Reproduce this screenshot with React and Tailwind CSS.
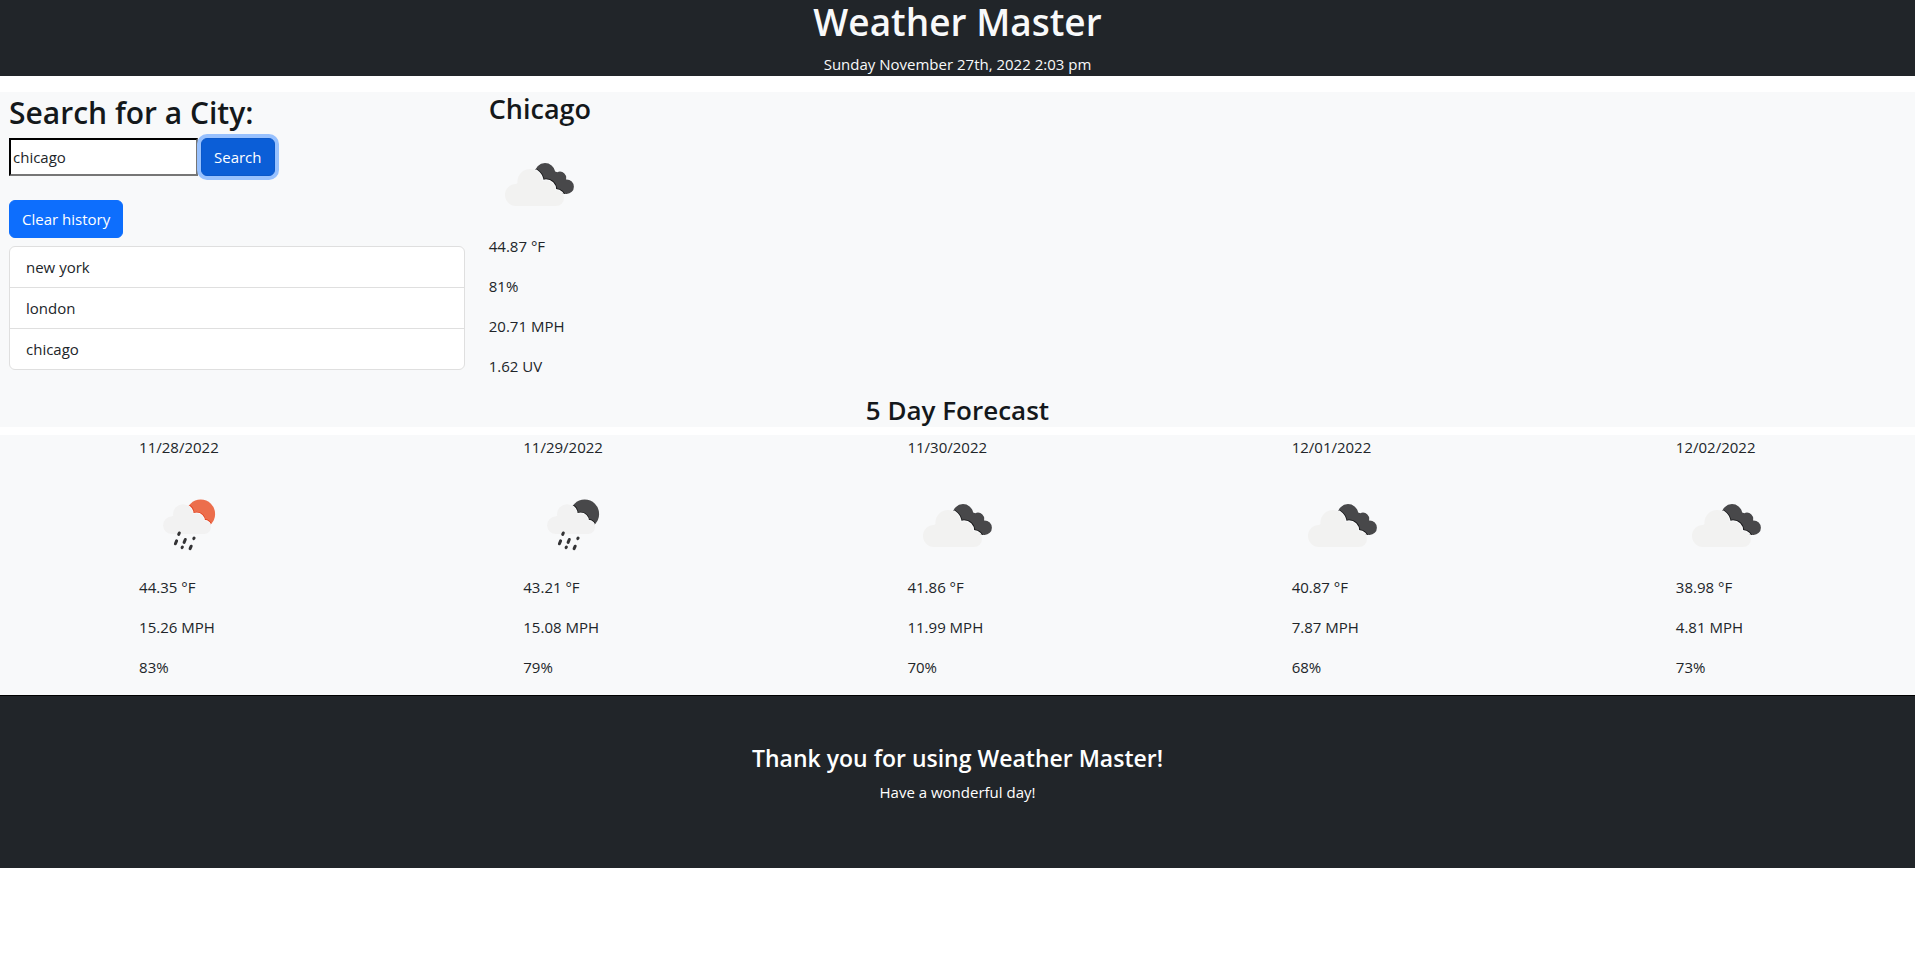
import { useId, useState } from "react";

const forecast = [
  { date: "11/28/2022", icon: "rain-day", temp: "44.35 °F", wind: "15.26 MPH", humidity: "83%" },
  { date: "11/29/2022", icon: "rain-night", temp: "43.21 °F", wind: "15.08 MPH", humidity: "79%" },
  { date: "11/30/2022", icon: "clouds", temp: "41.86 °F", wind: "11.99 MPH", humidity: "70%" },
  { date: "12/01/2022", icon: "clouds", temp: "40.87 °F", wind: "7.87 MPH", humidity: "68%" },
  { date: "12/02/2022", icon: "clouds", temp: "38.98 °F", wind: "4.81 MPH", humidity: "73%" },
];

function CloudsIcon() {
  const id = useId();
  const back = (
    <>
      <circle cx="56" cy="40.5" r="10.4" />
      <circle cx="71" cy="44.8" r="6.2" />
      <circle cx="77.6" cy="53.7" r="7.3" />
      <path d="M56 32L65 38L73 41L78 50L76 61L60 58L50 48Z" />
    </>
  );
  const front = (
    <>
      <circle cx="41" cy="48.6" r="12.6" />
      <circle cx="57" cy="56.4" r="9.2" />
      <circle cx="67" cy="65" r="8" />
    </>
  );
  return (
    <svg viewBox="0 1 100 100" className="size-[100px]" role="img" aria-label="Broken clouds">
      <clipPath id={id}>{back}</clipPath>
      <g clipPath={`url(#${id})`}>
        <rect width="100" height="100" fill="#48484a" />
        <g fill="#161617" stroke="#161617" strokeWidth="3.6">{front}</g>
        <g fill="#f8f9fa" stroke="#f8f9fa" strokeWidth="2">{front}</g>
      </g>
      <g fill="#f2f2f1">
        {front}
        <circle cx="27" cy="61.9" r="11" />
        <path d="M27 51L41 44L62 54L67 73H27Z" />
      </g>
    </svg>
  );
}

function RainIcon({ night }) {
  const id = useId();
  const front = (
    <>
      <circle cx="44" cy="39.3" r="10" />
      <circle cx="57.6" cy="46" r="7.6" />
      <circle cx="65.3" cy="52.3" r="6.7" />
    </>
  );
  const edge = night ? "#161617" : "#e23c18";
  return (
    <svg viewBox="0 0 100 100" className="size-[100px]" role="img" aria-label="Rain">
      <clipPath id={id}>
        <circle cx="61.7" cy="39" r="14.4" />
      </clipPath>
      <g clipPath={`url(#${id})`}>
        <rect width="100" height="100" fill={night ? "#48484a" : "#ec6e4c"} />
        <g fill={edge} stroke={edge} strokeWidth="3.2">{front}</g>
        <g fill="#f8f9fa" stroke="#f8f9fa" strokeWidth="1.6">{front}</g>
        <path d="M40 39L70 52L66 60H40Z" fill="#f2f2f2" />
      </g>
      <g fill="#f2f2f2">
        {front}
        <circle cx="33" cy="50.2" r="8.9" />
        <path d="M33 41.3L44 36L60 44L65.3 59H33Z" />
      </g>
      <g stroke="#333335" strokeWidth="3" strokeLinecap="round">
        <path d="M39.7 59.4L40.3 58M36.4 68.8L37.6 65.9M45.1 67.4L46.3 64.5M54.8 63.6L55.1 63.1M43.1 72.6L43.4 72.1M51.1 73.7L52.2 71.2" />
      </g>
    </svg>
  );
}

function WeatherIcon({ name }) {
  if (name === "clouds") return <CloudsIcon />;
  return <RainIcon night={name === "rain-night"} />;
}

export default function App() {
  const [city, setCity] = useState("chicago");
  return (
    <div className="bg-white font-['Open_Sans','Noto_Sans',sans-serif] text-[15px] leading-6 text-[#212529]">
      <header className="bg-[#212529] text-center text-[#f8f9fa]">
        <h1 className="mb-2 text-[37px] leading-11 font-semibold">Weather Master</h1>
        <p>Sunday November 27th, 2022 2:03 pm</p>
      </header>

      <main className="mt-4">
        <section className="bg-[#f8f9fa]">
          <div className="flex">
            <div className="w-1/4 pl-[9px] pr-3.5">
              <h2 className="pt-0.5 mb-1.5 text-[30px] leading-[38px] font-semibold text-[#14181b]">
                <label htmlFor="city">Search for a City:</label>
              </h2>
              <form className="flex gap-[3px]" onSubmit={(e) => e.preventDefault()}>
                <input
                  id="city"
                  type="text"
                  value={city}
                  onChange={(e) => setCity(e.target.value)}
                  className="h-[38px] w-[189px] border-2 border-t-black border-r-[#767676] border-b-[#767676] border-l-black bg-white px-0.5"
                />
                <button
                  type="submit"
                  className="h-[38px] rounded-md border border-[#0a58ca] bg-[#0b5ed7] px-3 text-white ring-4 ring-[#98c1fe]"
                >
                  Search
                </button>
              </form>
              <button
                type="button"
                className="mt-6 h-[38px] rounded-md border border-[#0d6efd] bg-[#0d6efd] px-3 text-white"
              >
                Clear history
              </button>
              <ul className="mt-2 divide-y divide-[#dfdfdf] rounded-md border border-[#dfdfdf] bg-white">
                {["new york", "london", "chicago"].map((name) => (
                  <li key={name} className="px-4 py-2">{name}</li>
                ))}
              </ul>
            </div>
            <div className="flex-1 pl-2.5">
              <h3 className="mb-2 text-[27px] leading-[34px] font-semibold text-[#14181b]">Chicago</h3>
              <CloudsIcon />
              <p className="mb-4">44.87 °F</p>
              <p className="mb-4">81%</p>
              <p className="mb-4">20.71 MPH</p>
              <p className="mb-4">1.62 UV</p>
            </div>
          </div>
          <h3 className="mb-2 text-center text-[26px] leading-[33px] font-semibold text-[#14181b]">5 Day Forecast</h3>
        </section>

        <section className="flex justify-around gap-1.5 bg-[#f8f9fa]">
          {forecast.map((day) => (
            <article key={day.date} className="w-[100px]">
              <p className="mb-4">{day.date}</p>
              <WeatherIcon name={day.icon} />
              <p className="mb-4">{day.temp}</p>
              <p className="mb-4">{day.wind}</p>
              <p className="mb-4">{day.humidity}</p>
            </article>
          ))}
        </section>
      </main>

      <footer className="border-t border-black bg-[#212529] pt-12 pb-16 text-center text-white">
        <h4 className="mb-2 text-[23px] leading-7 font-semibold">Thank you for using Weather Master!</h4>
        <p>Have a wonderful day!</p>
      </footer>
    </div>
  );
}
